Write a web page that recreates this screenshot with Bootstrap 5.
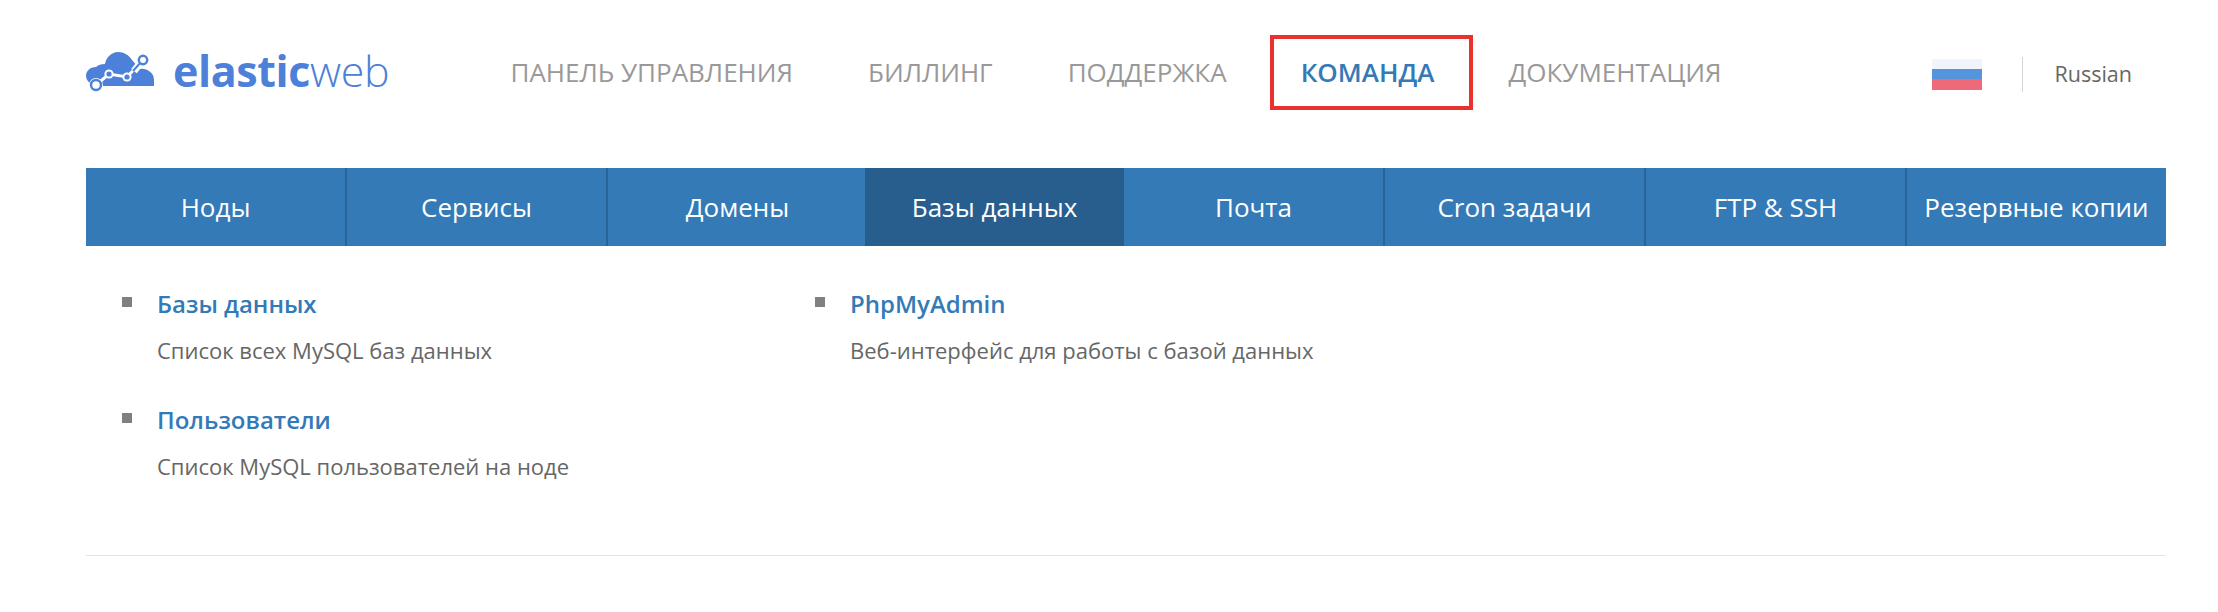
<!DOCTYPE html>
<html lang="ru">
<head>
  <meta charset="UTF-8" />
  <title>elasticweb</title>
  <link href="https://cdn.jsdelivr.net/npm/bootstrap@5.3.0/dist/css/bootstrap.min.css" rel="stylesheet" />
  <style>
    body { background: #fff; font-family: "Open Sans", "Noto Sans", sans-serif; color: #666; overflow: hidden; }
    .page-wrap { padding: 0 52px 0 86px; }
    .top-head { height: 168px; padding-bottom: 24px; }
    .logo-box { width: 387px; color: #4d80d9; text-decoration: none; }
    .logo-text { font-size: 43px; line-height: 1; margin-left: 19px; letter-spacing: -0.4px; padding-bottom: 4px; }
    .logo-text b { font-weight: 700; }
    .logo-text i { font-style: normal; font-weight: 300; }
    .main-link { font-size: 26px; color: #999; text-decoration: none; padding: 0 37.5px; white-space: nowrap; line-height: 33px; }
    .main-link.current { color: #337ab7; font-weight: 600; outline: 4px solid #e9322d; padding: 17px 35px 17px 27px; margin: 0 1.5px 0 9.5px; }
    .lang-box { margin-top: 5px; margin-right: 34px; }
    .flag-ru { width: 50px; height: 31px; background: linear-gradient(#f1f5fb 0 33%, #5595dd 33% 66%, #ee6a78 66%); }
    .lang-sep { width: 1px; height: 35px; background: #d5d5d5; margin: 0 31px 0 40px; }
    .lang-name { font-size: 21.5px; color: #666; }
    .tab-bar { background: #337ab7; height: 78px; }
    .tab-cell { flex: 1 1 0; color: #fff; font-size: 26px; text-decoration: none; border-right: 2px solid #2a6496; white-space: nowrap; }
    .tab-cell:last-child, .tab-cell.current, .tab-cell.before-current { border-right: 0; }
    .tab-cell.current { background: #285e8e; margin-left: -2px; }
    .sub-area { height: 310px; border-bottom: 1px solid #e5e5e5; padding: 43px 36px 0; }
    .sub-col { width: 693px; }
    .sub-item { padding-left: 35px; margin-bottom: 41px; position: relative; }
    .sub-item::before { content: ""; position: absolute; left: 0; top: 8px; width: 10px; height: 10px; background: #808080; }
    .sub-item a { display: block; font-size: 24px; font-weight: 600; color: #337ab7; text-decoration: none; line-height: 30px; }
    .sub-item p { font-size: 22px; line-height: 28px; margin: 17px 0 0; color: #666; }
  </style>
</head>
<body>
  <div class="page-wrap">
    <header class="top-head d-flex align-items-center">
      <a href="#" class="logo-box d-flex align-items-center">
        <svg width="68" height="40" viewBox="16 8 68 40">
          <!-- cloud -->
          <path fill="#4d80d9" d="M22 41C18 38 16 35 16 32C16 27 20 23 26 23C28 21 31 20 35 20C36 13 42 8 48 8C54 8 59 11 62 16L70 25C76 24 84 28 84 36V42H30Z"/>
          <!-- chart line -->
          <path fill="none" stroke="#fff" stroke-width="7" d="M64 27L73 16"/>
          <path fill="none" stroke="#fff" stroke-width="3" d="M26 41L39 30L57 33L73 16"/>
          <path fill="none" stroke="#4d80d9" stroke-width="2" d="M63 27L73 16"/>
          <circle cx="26" cy="41" r="7" fill="#fff"/>
          <circle cx="26" cy="41" r="5" fill="#fff" stroke="#4d80d9" stroke-width="2.4"/>
          <circle cx="39" cy="30" r="4.6" fill="#fff"/>
          <circle cx="39" cy="30" r="2.6" fill="#4d80d9"/>
          <circle cx="57" cy="33" r="4.6" fill="#fff"/>
          <circle cx="57" cy="33" r="2.6" fill="#4d80d9"/>
          <circle cx="73" cy="16" r="4.2" fill="#fff" stroke="#4d80d9" stroke-width="2.4"/>
        </svg>
        <span class="logo-text"><b>elastic</b><i>web</i></span>
      </a>
      <nav class="d-flex align-items-center flex-grow-1">
        <a href="#" class="main-link">ПАНЕЛЬ УПРАВЛЕНИЯ</a>
        <a href="#" class="main-link">БИЛЛИНГ</a>
        <a href="#" class="main-link">ПОДДЕРЖКА</a>
        <a href="#" class="main-link current">КОМАНДА</a>
        <a href="#" class="main-link">ДОКУМЕНТАЦИЯ</a>
      </nav>
      <div class="lang-box d-flex align-items-center">
        <div class="flag-ru"></div>
        <div class="lang-sep"></div>
        <span class="lang-name">Russian</span>
      </div>
    </header>

    <nav class="tab-bar d-flex">
      <a href="#" class="tab-cell d-flex align-items-center justify-content-center">Ноды</a>
      <a href="#" class="tab-cell d-flex align-items-center justify-content-center">Сервисы</a>
      <a href="#" class="tab-cell before-current d-flex align-items-center justify-content-center">Домены</a>
      <a href="#" class="tab-cell current d-flex align-items-center justify-content-center">Базы данных</a>
      <a href="#" class="tab-cell d-flex align-items-center justify-content-center">Почта</a>
      <a href="#" class="tab-cell d-flex align-items-center justify-content-center">Cron задачи</a>
      <a href="#" class="tab-cell d-flex align-items-center justify-content-center">FTP &amp; SSH</a>
      <a href="#" class="tab-cell d-flex align-items-center justify-content-center">Резервные копии</a>
    </nav>

    <section class="sub-area d-flex">
      <div class="sub-col">
        <div class="sub-item">
          <a href="#">Базы данных</a>
          <p>Список всех MySQL баз данных</p>
        </div>
        <div class="sub-item">
          <a href="#">Пользователи</a>
          <p>Список MySQL пользователей на ноде</p>
        </div>
      </div>
      <div class="sub-col">
        <div class="sub-item">
          <a href="#">PhpMyAdmin</a>
          <p>Веб-интерфейс для работы с базой данных</p>
        </div>
      </div>
    </section>
  </div>
  <script src="https://cdn.jsdelivr.net/npm/bootstrap@5.3.0/dist/js/bootstrap.bundle.min.js"></script>
</body>
</html>
